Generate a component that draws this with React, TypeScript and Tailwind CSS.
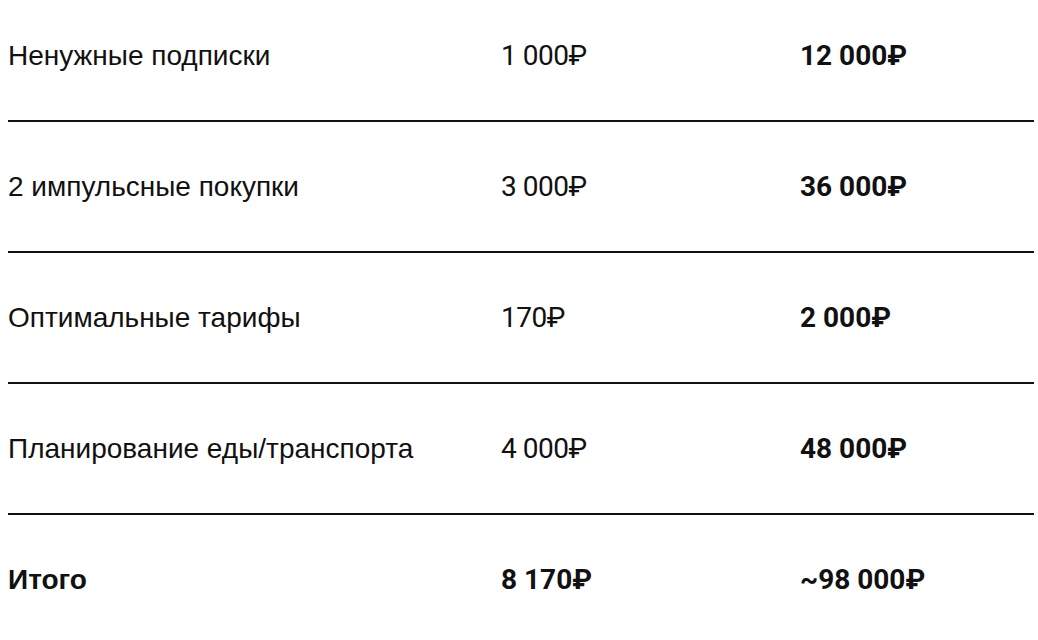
import React from "react";

const rows = [
  { label: "Ненужные подписки", m: "1 000₽", y: "12 000₽" },
  { label: "2 импульсные покупки", m: "3 000₽", y: "36 000₽" },
  { label: "Оптимальные тарифы", m: "170₽", y: "2 000₽" },
  { label: "Планирование еды/транспорта", m: "4 000₽", y: "48 000₽" },
];

export default function App() {
  return (
    <div className="w-[1038px] h-[640px] bg-white overflow-hidden text-[#111]">
      <div className="ml-[8px] mr-[4px] mt-[-9px]">
        {rows.map((r, i) => (
          <div
            key={i}
            className="grid grid-cols-[493px_299px_1fr] items-center h-[131px] border-b-2 border-[#111]"
          >
            <div className="font-['Liberation_Sans',Arial,sans-serif] text-[28px] leading-[33px]">
              {r.label}
            </div>
            <div className="font-['Roboto','Liberation_Sans',sans-serif] text-[28px] leading-[33px] tracking-[-0.5px]">
              {r.m}
            </div>
            <div className="font-['Roboto','Liberation_Sans',sans-serif] font-bold text-[28px] leading-[33px]">
              {r.y}
            </div>
          </div>
        ))}
        <div className="grid grid-cols-[493px_299px_1fr] items-center h-[129px]">
          <div className="font-['Liberation_Sans',Arial,sans-serif] font-bold text-[28px] leading-[33px]">
            Итого
          </div>
          <div className="font-['Roboto','Liberation_Sans',sans-serif] font-bold text-[28px] leading-[33px]">
            8 170₽
          </div>
          <div className="font-['Roboto','Liberation_Sans',sans-serif] font-bold text-[28px] leading-[33px]">
            ~98 000₽
          </div>
        </div>
      </div>
    </div>
  );
}
